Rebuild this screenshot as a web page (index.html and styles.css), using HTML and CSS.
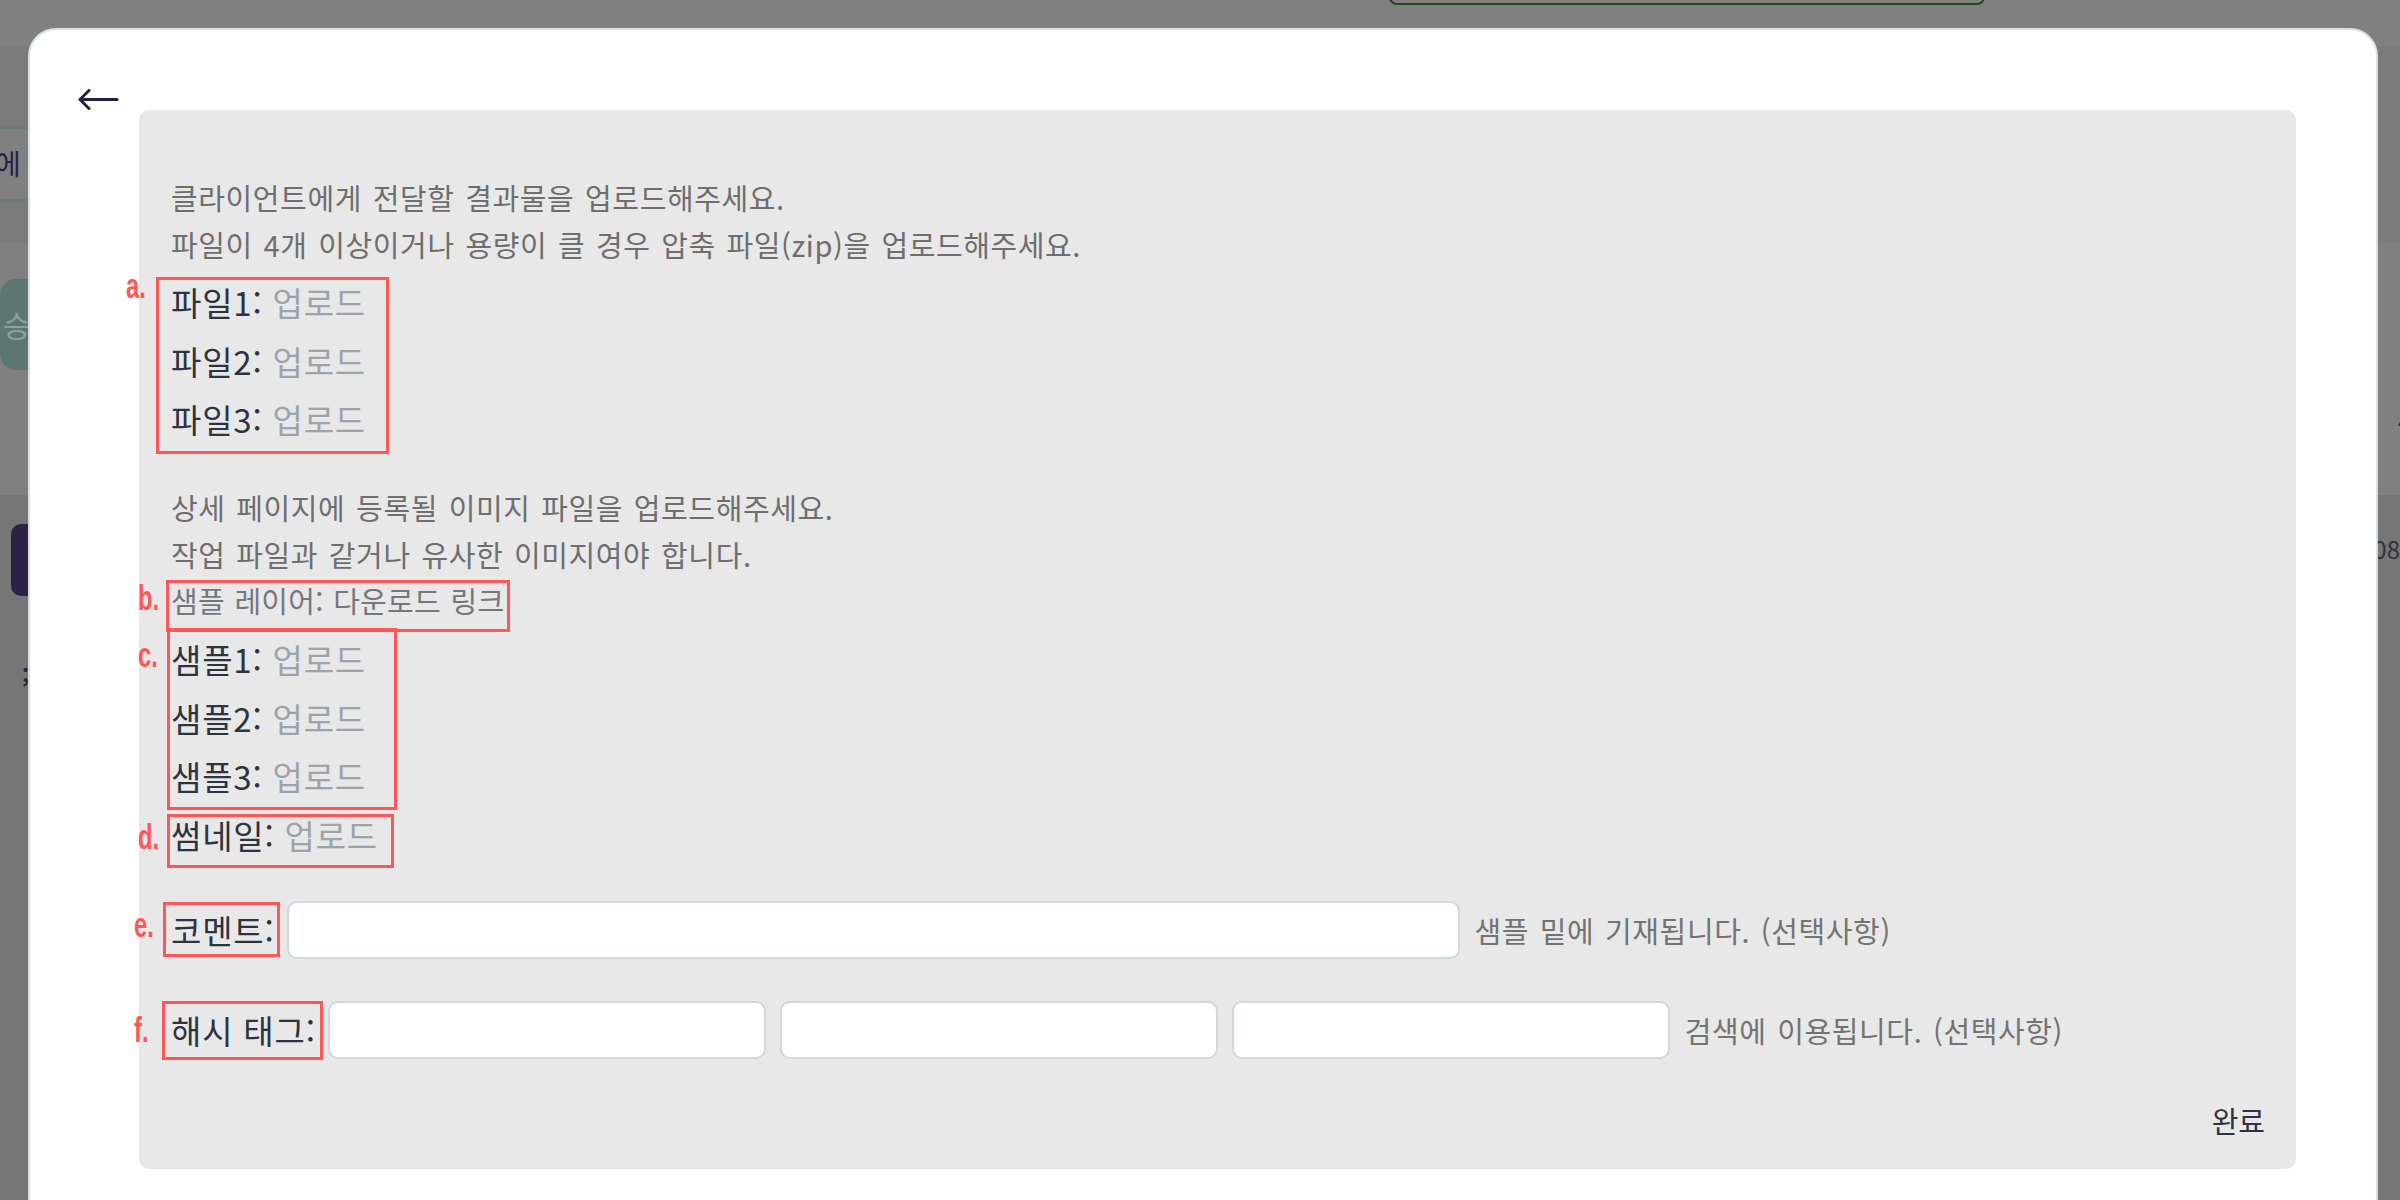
FILE: index.html
```html
<!DOCTYPE html>
<html lang="ko">

<head>
  <meta charset="UTF-8">
  <title>결과물 업로드</title>
  <link rel="stylesheet" href="styles.css">
</head>

<body>
  <!-- 모달 뒤에 깔린 페이지 (오버레이 때문에 어둡게 보임) -->
  <div class="page">
    <div class="page-top">
      <span class="top-btn"></span>
    </div>
    <div class="page-nav">
      <div class="nav-tab">에</div>
    </div>
    <div class="page-mid">
      <span class="state-pill">승</span>
      <span class="mid-mark">4</span>
    </div>
    <div class="page-list">
      <div class="list-left">
        <span class="list-btn"></span>
        <span class="list-text">;</span>
      </div>
      <span class="list-date">08</span>
    </div>
  </div>

  <!-- 결과물 업로드 모달 -->
  <div class="modal">
    <svg class="back" viewBox="0 0 41 21" width="41" height="21">
      <path d="M2 10.5 H39 M11 1.5 L2 10.5 L11 19.5" fill="none" stroke="#26203f" stroke-width="3" stroke-linecap="round" stroke-linejoin="round"/>
    </svg>

    <div class="panel">
      <p class="guide">
        클라이언트에게 전달할 결과물을 업로드해주세요.<br>
        파일이 4개 이상이거나 용량이 클 경우 압축 파일(zip)을 업로드해주세요.
      </p>

      <div class="group group-a">
        <span class="mark">a.</span>
        <div class="row">파일1: <span class="upload">업로드</span></div>
        <div class="row">파일2: <span class="upload">업로드</span></div>
        <div class="row">파일3: <span class="upload">업로드</span></div>
      </div>

      <p class="guide guide-2">
        상세 페이지에 등록될 이미지 파일을 업로드해주세요.<br>
        작업 파일과 같거나 유사한 이미지여야 합니다.
      </p>
      <p class="guide layer-link"><span class="mark">b.</span>샘플 레이어: 다운로드 링크</p>

      <div class="group group-c">
        <span class="mark">c.</span>
        <div class="row">샘플1: <span class="upload">업로드</span></div>
        <div class="row">샘플2: <span class="upload">업로드</span></div>
        <div class="row">샘플3: <span class="upload">업로드</span></div>
      </div>
      <div class="group group-d">
        <span class="mark">d.</span>
        <div class="row">썸네일: <span class="upload">업로드</span></div>
      </div>

      <div class="field field-comment">
        <label class="field-label label-e"><span class="mark">e.</span>코멘트:</label>
        <input type="text" class="input input-wide">
        <span class="hint">샘플 밑에 기재됩니다. (선택사항)</span>
      </div>

      <div class="field field-tags">
        <label class="field-label label-f"><span class="mark">f.</span>해시 태그:</label>
        <div class="tag-inputs">
          <input type="text" class="input input-tag">
          <input type="text" class="input input-tag">
          <input type="text" class="input input-tag">
        </div>
        <span class="hint">검색에 이용됩니다. (선택사항)</span>
      </div>

      <div class="done">완료</div>
    </div>
  </div>
</body>

</html>
```

FILE: styles.css
```css
* {
  margin: 0;
  padding: 0;
  box-sizing: border-box;
}
body {
  position: relative;
  width: 2400px;
  height: 1200px;
  overflow: hidden;
  background-color: #808080;
  font-family: "Noto Sans CJK KR", "Noto Sans", sans-serif;
}

/* 뒤 페이지 */
.page-top {
  display: flex;
  align-items: flex-start;
  height: 47px;
  padding-left: 1389px;
}
.top-btn {
  width: 596px;
  height: 45px;
  margin-top: -40px;
  border: 2px solid #1f4a1f;
  border-radius: 0 0 8px 8px;
}
.page-nav {
  height: 196px;
  padding-top: 80px;
  background-color: #7b7b7b;
}
.nav-tab {
  width: 60px;
  height: 74px;
  margin-left: -5px;
  border-top: 2px solid #6a7c79;
  border-bottom: 2px solid #6a7c79;
  background-color: #808080;
  color: #28224a;
  font-size: 28px;
  line-height: 68px;
}
.page-mid {
  display: flex;
  justify-content: space-between;
  align-items: flex-start;
  height: 252px;
  padding-top: 36px;
}
.state-pill {
  width: 60px;
  height: 91px;
  border-radius: 16px;
  background-color: #5c7672;
  color: #8aa09b;
  font-size: 30px;
  line-height: 91px;
  padding-left: 3px;
}
.mid-mark {
  margin-top: 128px;
  margin-right: -9px;
  color: #2b3340;
  font-size: 20px;
}
.page-list {
  display: flex;
  justify-content: space-between;
  align-items: flex-start;
  height: 705px;
  padding-top: 29px;
  background-color: #767676;
}
.list-left {
  display: flex;
  flex-direction: column;
  align-items: flex-start;
}
.list-btn {
  width: 80px;
  height: 72px;
  margin-left: 11px;
  border-radius: 10px;
  background-color: #2c2248;
}
.list-text {
  margin-top: 62px;
  margin-left: 22px;
  color: #2b2547;
  font-size: 22px;
  font-weight: 700;
}
.list-date {
  margin-top: 7px;
  color: #2b3340;
  font-size: 24px;
}

/* 모달 */
.modal {
  position: absolute;
  left: 28px;
  top: 28px;
  width: 2350px;
  height: 1220px;
  padding: 59px 80px 0 48px;
  border: 2px solid #d9dfe6;
  border-radius: 28px;
  background-color: #fff;
}
.back {
  display: block;
}
.panel {
  margin-left: 61px;
  padding: 64px 31px 26px 32px;
  border-radius: 10px;
  background-color: #e8e8e8;
}
.guide {
  color: #6e6e6e;
  font-size: 29px;
  line-height: 46.5px;
  letter-spacing: 0.6px;
  word-spacing: 2px;
}
.guide-2 {
  margin-top: 35.5px;
}
.group {
  position: relative;
  width: fit-content;
}
.group-a {
  margin-top: 6px;
}
.group-c {
  margin-top: 6.5px;
}
.row {
  color: #2d3340;
  font-size: 33px;
  line-height: 58.5px;
  letter-spacing: 0.8px;
  white-space: nowrap;
}
.upload {
  color: #9ea3ab;
}
.layer-link {
  position: relative;
  width: fit-content;
  color: #74787e;
  letter-spacing: 0.3px;
  word-spacing: 1px;
  white-space: nowrap;
}

/* 주석 표시 (빨간 박스, 글자) */
.mark {
  position: absolute;
  color: #ff5757;
  font-family: "Liberation Sans", Arial, sans-serif;
  font-weight: 700;
  font-size: 35px;
  line-height: 1;
  letter-spacing: 0;
  word-spacing: 0;
  white-space: nowrap;
  transform: scaleX(0.68);
  transform-origin: left top;
}
.group::after, .layer-link::after, .field-label::after {
  content: "";
  position: absolute;
  border: 3px solid #ff5757;
}
.group-a .mark { top: -5px; left: -45px; }
.group-a::after { top: 4px; bottom: -5px; left: -15px; right: -23px; }
.layer-link .mark { top: 3px; left: -33px; }
.layer-link::after { top: 3px; bottom: -8px; left: -5px; right: -6px; }
.group-c .mark { top: 7px; left: -33px; }
.group-c::after { top: -2px; bottom: -4px; left: -4px; right: -31px; }
.group-d .mark { top: 13px; left: -33px; }
.group-d::after { top: 8px; bottom: -4px; left: -4px; right: -16px; }
.label-e .mark { top: 0; left: -37px; }
.label-e::after { top: -5px; bottom: -4px; left: -8px; right: -5px; }
.label-f .mark { top: 5px; left: -37px; }
.label-f::after { top: -6px; bottom: -7px; left: -9px; right: -7px; }

/* 입력 줄 */
.field {
  display: flex;
  align-items: center;
  gap: 12px;
}
.field-comment {
  margin-top: 37px;
}
.field-tags {
  margin-top: 42px;
}
.field-label {
  position: relative;
  color: #2d3340;
  font-size: 33px;
  line-height: 46px;
  letter-spacing: 0.8px;
  white-space: nowrap;
}
.input {
  height: 58px;
  border: 2px solid #cfd7e1;
  border-radius: 10px;
  background-color: #fff;
  outline: none;
}
.input-wide {
  width: 1173px;
}
.tag-inputs {
  display: flex;
  gap: 14px;
}
.input-tag {
  width: 438px;
}
.hint {
  margin-left: 3px;
  color: #737373;
  font-size: 29px;
  letter-spacing: 0.6px;
  word-spacing: 2px;
  white-space: nowrap;
}
.done {
  margin-top: 38px;
  color: #2d3340;
  font-size: 29px;
  line-height: 46px;
  text-align: right;
}
```
